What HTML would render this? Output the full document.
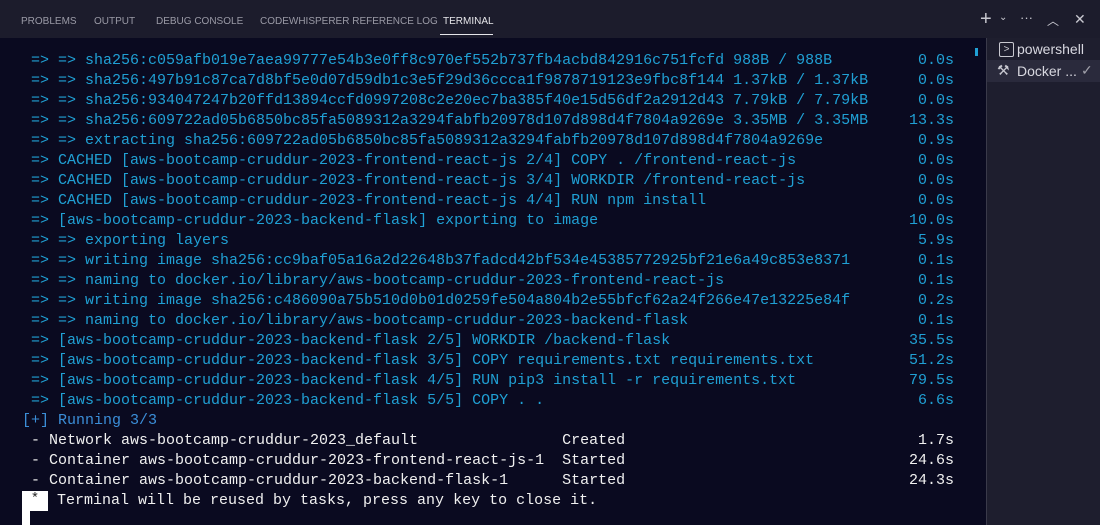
<!DOCTYPE html>
<html><head><style>
body{margin:0;width:1100px;height:525px;overflow:hidden;background:#0a0a20;font-family:"Liberation Sans",sans-serif;position:relative}
.top{position:absolute;left:0;top:0;width:1100px;height:38px;background:#1c1c2c}
.tab{position:absolute;top:16px;font-size:10px;color:#9a9aa6;white-space:nowrap}
.act{color:#e6e6ea}
.side{position:absolute;left:986px;top:38px;width:114px;height:487px;background:#1e1e2e;border-left:1px solid #3a3a4a}
.t{position:absolute;left:0;width:960px;font-family:"Liberation Mono",monospace;font-size:15px;line-height:20px;color:#20a0d4}
.l{height:20px;position:relative;white-space:pre}
.r{position:absolute;right:3px;top:0}
.w{color:#f0f0f0}
.b{color:#3b8ed8}
</style></head><body>
<div class="top"></div>
<div class="tab" style="left:21px">PROBLEMS</div>
<div class="tab" style="left:94px">OUTPUT</div>
<div class="tab" style="left:156px">DEBUG CONSOLE</div>
<div class="tab" style="left:260px">CODEWHISPERER REFERENCE LOG</div>
<div class="tab act" style="left:443px">TERMINAL</div>
<div style="position:absolute;left:440px;top:34px;width:53px;height:1px;background:#e6e6ea"></div>
<div style="position:absolute;left:980px;top:8px;color:#c8c8d0;font-size:20px">+</div>
<div style="position:absolute;left:999px;top:12px;color:#c8c8d0;font-size:10px">⌄</div>
<div style="position:absolute;left:1020px;top:10px;color:#c8c8d0;font-size:13px">···</div>
<div style="position:absolute;left:1047px;top:12px;color:#c8c8d0;font-size:12px">︿</div>
<div style="position:absolute;left:1074px;top:11px;color:#c8c8d0;font-size:14px">✕</div>
<div style="position:absolute;left:975px;top:48px;width:3px;height:8px;background:#20a0d4"></div>
<div class="side">
<div style="position:absolute;left:12px;top:4px;width:13px;height:13px;border:1px solid #c8c8d0;border-radius:2px;color:#c8c8d0;font-size:10px;line-height:13px;text-align:center">&gt;</div>
<div style="position:absolute;left:30px;top:3px;color:#d8d8e0;font-size:14px">powershell</div>
<div style="position:absolute;left:0;top:22px;width:114px;height:22px;background:#2a2a3c"></div>
<div style="position:absolute;left:10px;top:24px;color:#c8c8d0;font-size:14px">⚒</div>
<div style="position:absolute;left:30px;top:25px;color:#d8d8e0;font-size:14px">Docker ...</div>
<div style="position:absolute;left:94px;top:24px;color:#a0a0aa;font-size:14px">✓</div>
</div>
<div class="t" style="top:51px;left:31px;width:926px">
<div class="l">=&gt; =&gt; sha256:c059afb019e7aea99777e54b3e0ff8c970ef552b737fb4acbd842916c751fcfd 988B / 988B<span class="r">0.0s</span></div>
<div class="l">=&gt; =&gt; sha256:497b91c87ca7d8bf5e0d07d59db1c3e5f29d36ccca1f9878719123e9fbc8f144 1.37kB / 1.37kB<span class="r">0.0s</span></div>
<div class="l">=&gt; =&gt; sha256:934047247b20ffd13894ccfd0997208c2e20ec7ba385f40e15d56df2a2912d43 7.79kB / 7.79kB<span class="r">0.0s</span></div>
<div class="l">=&gt; =&gt; sha256:609722ad05b6850bc85fa5089312a3294fabfb20978d107d898d4f7804a9269e 3.35MB / 3.35MB<span class="r">13.3s</span></div>
<div class="l">=&gt; =&gt; extracting sha256:609722ad05b6850bc85fa5089312a3294fabfb20978d107d898d4f7804a9269e<span class="r">0.9s</span></div>
<div class="l">=&gt; CACHED [aws-bootcamp-cruddur-2023-frontend-react-js 2/4] COPY . /frontend-react-js<span class="r">0.0s</span></div>
<div class="l">=&gt; CACHED [aws-bootcamp-cruddur-2023-frontend-react-js 3/4] WORKDIR /frontend-react-js<span class="r">0.0s</span></div>
<div class="l">=&gt; CACHED [aws-bootcamp-cruddur-2023-frontend-react-js 4/4] RUN npm install<span class="r">0.0s</span></div>
<div class="l">=&gt; [aws-bootcamp-cruddur-2023-backend-flask] exporting to image<span class="r">10.0s</span></div>
<div class="l">=&gt; =&gt; exporting layers<span class="r">5.9s</span></div>
<div class="l">=&gt; =&gt; writing image sha256:cc9baf05a16a2d22648b37fadcd42bf534e45385772925bf21e6a49c853e8371<span class="r">0.1s</span></div>
<div class="l">=&gt; =&gt; naming to docker.io/library/aws-bootcamp-cruddur-2023-frontend-react-js<span class="r">0.1s</span></div>
<div class="l">=&gt; =&gt; writing image sha256:c486090a75b510d0b01d0259fe504a804b2e55bfcf62a24f266e47e13225e84f<span class="r">0.2s</span></div>
<div class="l">=&gt; =&gt; naming to docker.io/library/aws-bootcamp-cruddur-2023-backend-flask<span class="r">0.1s</span></div>
<div class="l">=&gt; [aws-bootcamp-cruddur-2023-backend-flask 2/5] WORKDIR /backend-flask<span class="r">35.5s</span></div>
<div class="l">=&gt; [aws-bootcamp-cruddur-2023-backend-flask 3/5] COPY requirements.txt requirements.txt<span class="r">51.2s</span></div>
<div class="l">=&gt; [aws-bootcamp-cruddur-2023-backend-flask 4/5] RUN pip3 install -r requirements.txt<span class="r">79.5s</span></div>
<div class="l">=&gt; [aws-bootcamp-cruddur-2023-backend-flask 5/5] COPY . .<span class="r">6.6s</span></div>
</div>
<div class="t b" style="top:411px;left:22px"><div class="l">[+] Running 3/3</div></div>
<div class="t w" style="top:431px;left:31px;width:926px">
<div class="l">- Network aws-bootcamp-cruddur-2023_default                Created<span class="r">1.7s</span></div>
<div class="l">- Container aws-bootcamp-cruddur-2023-frontend-react-js-1  Started<span class="r">24.6s</span></div>
<div class="l">- Container aws-bootcamp-cruddur-2023-backend-flask-1      Started<span class="r">24.3s</span></div>
</div>
<div style="position:absolute;left:22px;top:491px;width:26px;height:20px;background:#fff;color:#222;font-family:'Liberation Mono',monospace;font-size:14px;text-align:center;line-height:16px">*</div>
<div style="position:absolute;left:22px;top:511px;width:8px;height:14px;background:#fff"></div>
<div class="t w" style="top:491px;left:57px"><div class="l">Terminal will be reused by tasks, press any key to close it.</div></div>
</body></html>
